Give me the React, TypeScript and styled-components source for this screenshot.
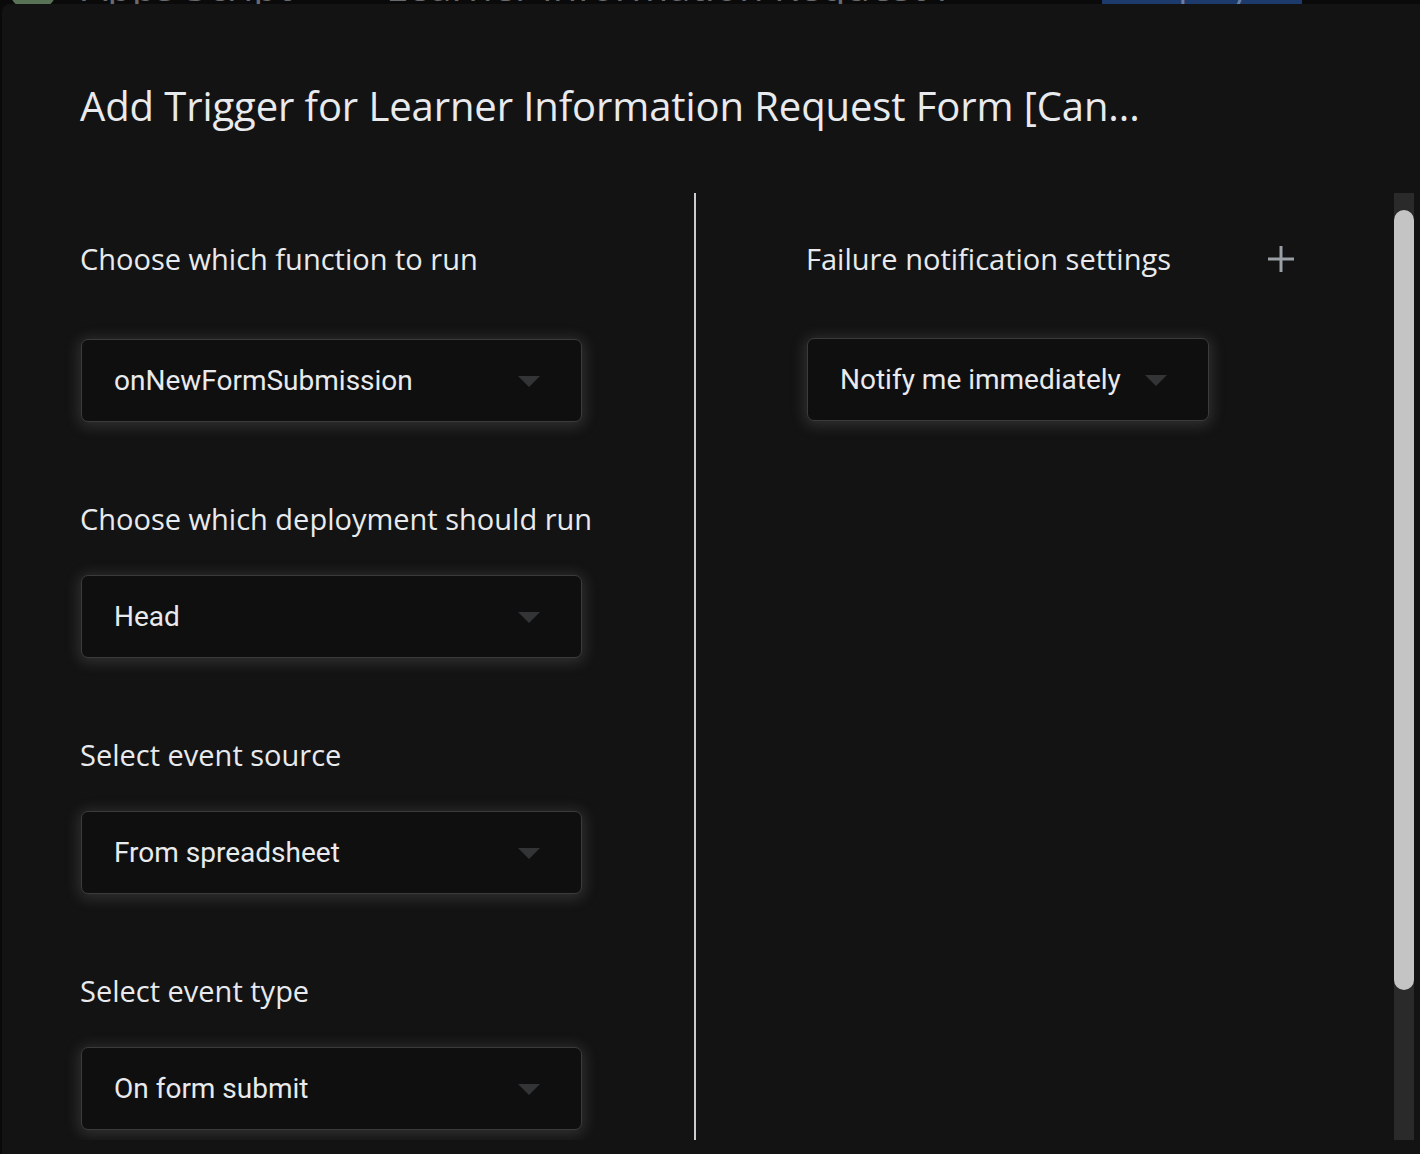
import React from "react";
import styled, { createGlobalStyle } from "styled-components";

const Global = createGlobalStyle`
  html, body { margin: 0; padding: 0; background: #0a0a0a; overflow: hidden; }
  body { width: 1420px; height: 1154px; }
`;

const Page = styled.div`
  position: relative;
  width: 1420px;
  height: 1154px;
  background: #0a0a0a;
  overflow: hidden;
`;

const AppHeader = styled.div`
  display: flex;
  align-items: flex-start;
  height: 4px;
  overflow: visible;
  font-family: "Open Sans", sans-serif;
  color: #6a6b6e;
`;

const HeaderInner = styled.div`
  display: flex;
  align-items: center;
  height: 60px;
  margin-top: -44px;
  width: 100%;
`;

const Logo = styled.div`
  width: 50px;
  height: 50px;
  margin-left: 8px;
  border-radius: 50%;
  background: conic-gradient(#b8963b 0 33%, #6c8d6a 33% 66%, #3a5a9a 66% 100%);
  opacity: 0.8;
`;

const HeaderTitle = styled.div<{ $w: number }>`
  width: ${(p) => p.$w}px;
  font-size: 40px;
  line-height: 60px;
  white-space: nowrap;
  overflow: hidden;
  padding-left: 24px;
`;

const DeployBtn = styled.div`
  margin-left: auto;
  margin-right: 118px;
  width: 200px;
  height: 60px;
  background: #1c3a6b;
  color: #6b7ea3;
  font-size: 36px;
  line-height: 60px;
  padding-left: 30px;
  box-sizing: border-box;
`;

const Dialog = styled.div`
  position: absolute;
  left: 2px;
  top: 4px;
  right: 0;
  bottom: 0;
  background: #131313;
  border-radius: 8px 0 0 0;
  display: flex;
  flex-direction: column;
`;

const Title = styled.h1`
  margin: 0;
  padding: 80px 0 0 78px;
  height: 106px;
  box-sizing: border-box;
  font-family: "Open Sans", sans-serif;
  font-weight: 500;
  font-size: 40px;
  line-height: 44px;
  color: #e8eaed;
  white-space: nowrap;
  letter-spacing: -0.1px;
`;

const Body = styled.div`
  margin-top: 83px;
  height: 947px;
  display: flex;
  overflow: hidden;
`;

const Content = styled.div`
  flex: 1;
  display: grid;
  grid-template-columns: 614px 2px 1fr;
  padding-left: 78px;
`;

const Column = styled.div<{ $pl?: number }>`
  display: flex;
  flex-direction: column;
  align-items: flex-start;
  padding-top: 46px;
  padding-left: ${(p) => p.$pl ?? 0}px;
`;

const Divider = styled.div`
  background: #c9ccd0;
  width: 2px;
  height: 100%;
`;

const Label = styled.div<{ $mt?: number }>`
  margin-top: ${(p) => p.$mt ?? 0}px;
  font-family: "Open Sans", sans-serif;
  font-size: 29px;
  line-height: 40px;
  height: 40px;
  color: #e8eaed;
  white-space: nowrap;
`;

const LabelRow = styled.div`
  display: flex;
  align-items: center;
  width: 490px;
  justify-content: space-between;
`;

const PlusBtn = styled.div`
  width: 30px;
  height: 30px;
  display: flex;
  align-items: center;
  justify-content: center;
  color: #9aa0a6;
`;

const Select = styled.div<{ $mt: number; $w?: number }>`
  margin-top: ${(p) => p.$mt}px;
  margin-left: 1px;
  ${(p) => (p.$w ? `width: ${p.$w}px;` : "")}
  height: 83px;
  box-sizing: border-box;
  display: flex;
  align-items: center;
  padding: 0 41px 0 32px;
  gap: 24px;
  background: #0f0f0f;
  border: 1px solid #3a3b3d;
  border-radius: 7px;
  box-shadow: 0 2px 14px 3px rgba(150, 152, 156, 0.22);
`;

const SelectText = styled.span`
  flex: 1;
  font-family: Roboto, sans-serif;
  font-size: 28px;
  color: #e8eaed;
  white-space: nowrap;
`;

const Arrow = styled.span`
  width: 0;
  height: 0;
  border-left: 11px solid transparent;
  border-right: 11px solid transparent;
  border-top: 11px solid #333436;
  margin-top: 2px;
`;

const ScrollTrack = styled.div`
  width: 20px;
  margin-right: 6px;
  background: #2a2a2a;
  padding-top: 17px;
  box-sizing: border-box;
`;

const ScrollThumb = styled.div`
  height: 780px;
  background: #c4c4c4;
  border-radius: 10px;
`;

const Dropdown: React.FC<{ text: string; mt: number; w?: number }> = ({ text, mt, w }) => (
  <Select $mt={mt} $w={w}>
    <SelectText>{text}</SelectText>
    <Arrow />
  </Select>
);

export default function App() {
  return (
    <Page>
      <Global />
      <AppHeader>
        <HeaderInner>
          <Logo />
          <HeaderTitle $w={280}>Apps Script</HeaderTitle>
          <HeaderTitle $w={700}>Learner Information Request F</HeaderTitle>
          <DeployBtn>Deploy ▾</DeployBtn>
        </HeaderInner>
      </AppHeader>
      <Dialog>
        <Title>Add Trigger for Learner Information Request Form [Can...</Title>
        <Body>
          <Content>
            <Column>
              <Label>Choose which function to run</Label>
              <Dropdown text="onNewFormSubmission" mt={60} w={501} />
              <Label $mt={77}>Choose which deployment should run</Label>
              <Dropdown text="Head" mt={36} w={501} />
              <Label $mt={77}>Select event source</Label>
              <Dropdown text="From spreadsheet" mt={36} w={501} />
              <Label $mt={77}>Select event type</Label>
              <Dropdown text="On form submit" mt={36} w={501} />
            </Column>
            <Divider />
            <Column $pl={110}>
              <LabelRow>
                <Label>Failure notification settings</Label>
                <PlusBtn>
                  <svg width="28" height="28" viewBox="0 0 28 28">
                    <path d="M14 1v26M1 14h26" stroke="currentColor" strokeWidth="3" fill="none" />
                  </svg>
                </PlusBtn>
              </LabelRow>
              <Dropdown text="Notify me immediately" mt={59} />
            </Column>
          </Content>
          <ScrollTrack>
            <ScrollThumb />
          </ScrollTrack>
        </Body>
      </Dialog>
    </Page>
  );
}
